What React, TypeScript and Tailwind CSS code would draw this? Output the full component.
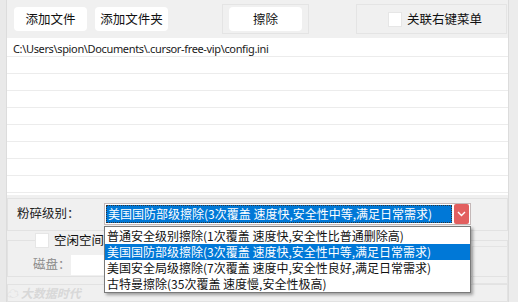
import React from "react";

const font = { fontFamily: '"Noto Sans CJK SC", "Noto Sans", sans-serif' };

function Btn({ children, className = "" }: { children: React.ReactNode; className?: string }) {
  return (
    <div
      className={`h-[24px] w-[73px] bg-white rounded-[4px] flex items-center justify-center text-[12.5px] text-[#111] leading-none ${className}`}
    >
      {children}
    </div>
  );
}

export default function App() {
  const rows = Array.from({ length: 9 });
  const items = [
    "普通安全级别擦除(1次覆盖 速度快,安全性比普通删除高)",
    "美国国防部级擦除(3次覆盖 速度快,安全性中等,满足日常需求)",
    "美国安全局级擦除(7次覆盖 速度中,安全性良好,满足日常需求)",
    "古特曼擦除(35次覆盖 速度慢,安全性极高)",
  ];
  return (
    <div className="w-[518px] h-[302px] bg-[#f0f0f0] overflow-hidden relative" style={font}>
      <div className="flex h-full">
        <div className="w-[7px] h-full bg-[#e9e9e9] border-r border-[#dcdcdc]" />
        <div className="flex-1 flex flex-col min-w-0">
          {/* toolbar */}
          <div className="h-[38px] flex items-center pl-[7px]">
            <Btn>添加文件</Btn>
            <Btn className="ml-[8px]">添加文件夹</Btn>
            <div className="ml-[54px] w-[87px] h-[30px] border border-[#e4e4e4] flex items-center justify-center">
              <Btn>擦除</Btn>
            </div>
            <div className="ml-[47px] w-[151px] h-[30px] border border-[#e4e4e4] flex items-center pl-[31px]">
              <div className="w-[14px] h-[15px] bg-white border border-[#e6e6e6]" />
              <span className="ml-[5px] text-[12.5px] text-[#111] leading-none">关联右键菜单</span>
            </div>
          </div>
          {/* file list */}
          <div className="h-[157px] w-[501px] bg-white pt-[2px]">
            {rows.map((_, i) => (
              <div key={i} className="h-[17px] border-b border-[#ececec] flex items-center pl-[6px]">
                {i === 0 && (
                  <span
                    className="text-[11px] text-[#1a1a1a] leading-none tracking-[-0.35px]"
                    style={{ fontFamily: '"Noto Sans", sans-serif' }}
                  >
                    C:\Users\spion\Documents\.cursor-free-vip\config.ini
                  </span>
                )}
              </div>
            ))}
          </div>
          {/* level row */}
          <div className="mt-[3px] h-[33px] w-[501px] border border-[#e2e2e2] flex items-start pt-[4px]">
            <span className="ml-[9px] mt-[4px] text-[12.5px] text-[#222] leading-none w-[87px]">粉碎级别：</span>
            <div className="w-[367px] h-[22px] border border-[#c4b8b8] bg-white flex items-center pl-[1px] pr-[1px]">
              <div className="flex-1 h-[18px] border border-dotted border-[#333] bg-[#0078d7] flex items-center pl-[1px]">
                <span className="text-[12px] text-white leading-none whitespace-nowrap">
                  美国国防部级擦除(3次覆盖 速度快,安全性中等,满足日常需求)
                </span>
              </div>
              <div className="ml-[2px] w-[15px] h-[20px] bg-[#e25f5f] rounded-[2px] flex items-center justify-center">
                <svg width="9" height="6" viewBox="0 0 9 6">
                  <path d="M1 1 L4.5 4.5 L8 1" stroke="white" strokeWidth="1.4" fill="none" />
                </svg>
              </div>
            </div>
          </div>
          {/* free space group */}
          <fieldset className="mt-[2px] w-[501px] h-[44px] border border-[#e2e2e2] px-0">
            <legend className="ml-[27px] px-0 flex items-center h-[15px]">
              <div className="w-[14px] h-[15px] bg-white border border-[#e6e6e6]" />
              <span className="ml-[5px] text-[12.5px] text-[#111] leading-none">空闲空间擦除</span>
            </legend>
            <div className="flex items-center mt-[-3px]">
              <span className="ml-[25px] text-[12.5px] text-[#8a8a8a] leading-none w-[38px]">磁盘：</span>
              <div className="w-[100px] h-[20px] bg-white" />
              <div className="ml-auto mr-[-1px] w-[36px] h-[38px] mt-[1px] border border-[#e4e4e4]" />
            </div>
          </fieldset>
          <div className="mt-[7px] w-[501px] flex-1 border border-[#e2e2e2] flex items-start pt-[2px]">
            <span className="ml-[-2px] text-[12px] text-[#d8d8d8] leading-none italic font-bold">
              ☁ 大数据时代
            </span>
          </div>
        </div>
        <div className="w-[10px] h-full bg-[#ececec] border-l border-[#dcdcdc]" />
      </div>

      {/* dropdown list overlay */}
      <div className="absolute left-[104px] top-[226px] w-[367px] h-[67px] bg-white border border-[#7a7a7a] shadow-[2px_2px_3px_rgba(0,0,0,0.35)] pt-[1px]">
        {items.map((t, i) => (
          <div
            key={i}
            className={`h-[16px] flex items-center pl-[2px] text-[12px] leading-none whitespace-nowrap ${
              i === 1 ? "bg-[#0078d7] text-white" : "text-[#111]"
            }`}
          >
            {t}
          </div>
        ))}
      </div>
    </div>
  );
}
